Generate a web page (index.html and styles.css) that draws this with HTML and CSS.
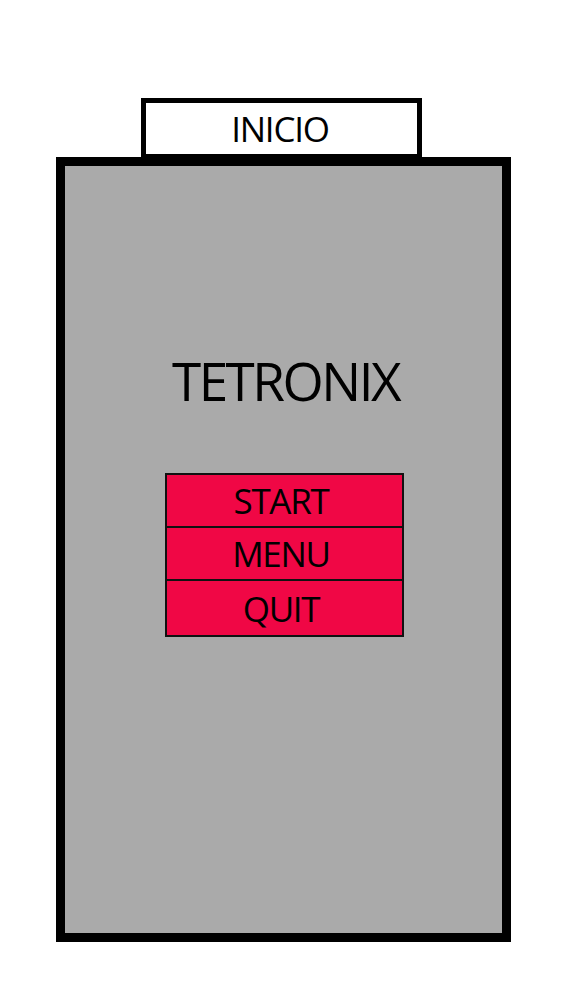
FILE: index.html
```html
<!DOCTYPE html>
<html lang="es">
<head>
  <meta charset="UTF-8">
  <title>Tetronix - Inicio</title>
  <link rel="stylesheet" href="styles.css">
</head>
<body>

  <!-- Pantalla de inicio -->
  <div class="screen">
    <div class="tab">INICIO</div>

    <div class="main">
      <h1 class="title">TETRONIX</h1>

      <div class="menu">
        <button class="menu-item">START</button>
        <button class="menu-item">MENU</button>
        <button class="menu-item last">QUIT</button>
      </div>
    </div>
  </div>

</body>
</html>
```

FILE: styles.css
```css
* {
  box-sizing: border-box;
}

body {
  margin: 0;
  background: #fff;
  font-family: "Open Sans", "Liberation Sans", sans-serif;
  color: #000;
}

.screen {
  padding-top: 98px;
}

.tab {
  width: 281px;
  margin-left: 141px;
  padding-right: 3px;
  border: 5px solid #000;
  border-bottom-width: 3px;
  background: #fff;
  font-size: 35px;
  line-height: 51px;
  letter-spacing: -1.2px;
  text-align: center;
}

.main {
  width: 455px;
  height: 785px;
  margin-left: 56px;
  border: 9px solid #000;
  background: #aaaaaa;
  display: flex;
  flex-direction: column;
  align-items: center;
}

.title {
  margin: 188px 0 66px 4px;
  font-size: 53px;
  font-weight: normal;
  line-height: 53px;
  letter-spacing: -2.5px;
}

.menu {
  width: 239px;
  margin-left: 1px;
  border: 2px solid #111;
  display: flex;
  flex-direction: column;
}

.menu-item {
  height: 53px;
  padding: 0 6px 0 0;
  border: none;
  border-bottom: 2px solid #111;
  background: #f00745;
  font-family: inherit;
  font-size: 35px;
  line-height: 51px;
  letter-spacing: -1.3px;
  color: #000;
}

.menu-item.last {
  height: 54px;
  border-bottom: none;
}
```
